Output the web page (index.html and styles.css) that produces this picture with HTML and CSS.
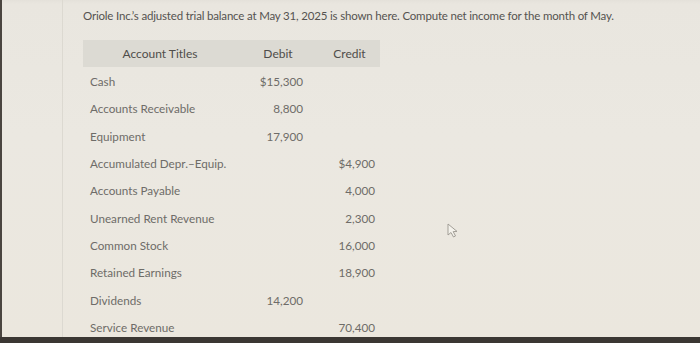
FILE: index.html
```html
<!DOCTYPE html>
<html>
<head>
<meta charset="utf-8">
<link rel="stylesheet" href="styles.css">
</head>
<body>
<div class="screen">
  <div class="gutter"></div>
  <div class="main">
    <p class="prompt">Oriole Inc.’s adjusted trial balance at May 31, 2025 is shown here. Compute net income for the month of May.</p>
    <div class="tb">
      <div class="hd">Account Titles</div><div class="hd">Debit</div><div class="hd">Credit</div>
      <div class="nm">Cash</div><div class="dr">$15,300</div><div class="cr"></div>
      <div class="nm">Accounts Receivable</div><div class="dr">8,800</div><div class="cr"></div>
      <div class="nm">Equipment</div><div class="dr">17,900</div><div class="cr"></div>
      <div class="nm">Accumulated Depr.–Equip.</div><div class="dr"></div><div class="cr">$4,900</div>
      <div class="nm">Accounts Payable</div><div class="dr"></div><div class="cr">4,000</div>
      <div class="nm">Unearned Rent Revenue</div><div class="dr"></div><div class="cr">2,300</div>
      <div class="nm">Common Stock</div><div class="dr"></div><div class="cr">16,000</div>
      <div class="nm">Retained Earnings</div><div class="dr"></div><div class="cr">18,900</div>
      <div class="nm">Dividends</div><div class="dr">14,200</div><div class="cr"></div>
      <div class="nm">Service Revenue</div><div class="dr"></div><div class="cr">70,400</div>
    </div>
    <svg class="cursor" width="12" height="16" viewBox="0 0 12 16"><path d="M1 1 L1 12 L4 9.5 L6.5 14 L8.5 13 L6.2 8.6 L10 8.4 Z" fill="#f4f2ec" stroke="#9a968e" stroke-width="0.9" stroke-linejoin="round"/></svg>
  </div>
</div>
<div class="bezel"></div>
</body>
</html>
```
FILE: styles.css
```css
html, body {
  margin: 0;
  padding: 0;
  background: #3c3834;
}
body {
  width: 700px;
  height: 343px;
  overflow: hidden;
  font-family: Lato, "Open Sans", sans-serif;
}
.screen {
  display: flex;
  height: 337px;
  border-left: 2px solid #4a4540;
  background: linear-gradient(180deg, #e4e1da 0px, #e9e6df 4px, #ebe8e1 40%, #ebe7de 100%);
  box-sizing: border-box;
}
.gutter {
  width: 60px;
  flex: none;
  border-right: 1px solid #dcd9d1;
}
.main {
  position: relative;
  flex: 1;
  padding: 9px 0 0 20px;
}
.prompt {
  margin: 0;
  font-size: 11.5px;
  line-height: 14px;
  color: #555350;
  letter-spacing: -0.18px;
}
.tb {
  display: grid;
  grid-template-columns: 154px 82px 61px;
  grid-auto-rows: 27.33px;
  width: 297px;
  margin-top: 17px;
  font-size: 11.7px;
  color: #6e6c68;
}
.hd {
  background: #dcdad3;
  height: 27px;
  display: flex;
  align-items: center;
  justify-content: center;
  font-size: 12px;
  color: #4f4d4a;
}
.nm, .dr, .cr {
  display: flex;
  align-items: center;
}
.nm { padding-left: 7px; }
.dr { justify-content: flex-end; padding-right: 16px; }
.cr { justify-content: flex-end; padding-right: 5px; }
.cursor {
  position: absolute;
  left: 384px;
  top: 223px;
}
.bezel {
  height: 6px;
  background: #3b3733;
}
```
